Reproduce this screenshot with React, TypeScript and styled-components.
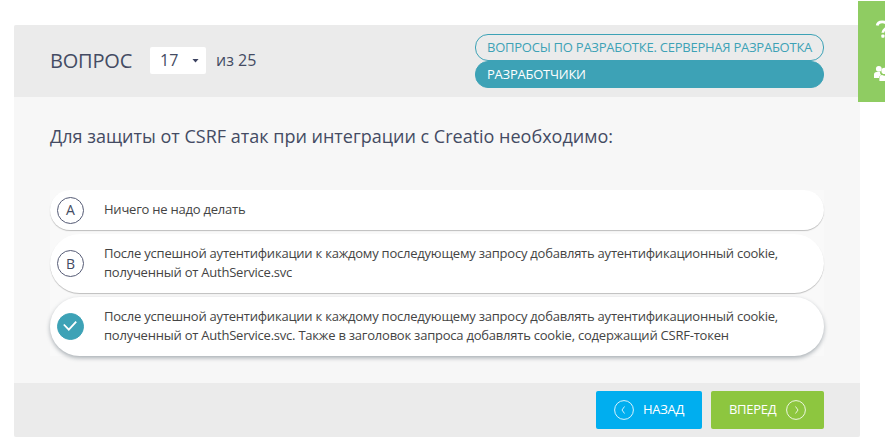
import React from "react";
import styled, { createGlobalStyle } from "styled-components";

const GlobalStyle = createGlobalStyle`
  *, *::before, *::after { box-sizing: border-box; }
  body {
    margin: 0;
    background: #fff;
    color: #444;
    font-family: "Open Sans", "Noto Sans", sans-serif;
    overflow: hidden;
  }
`;

const Page = styled.div`
  position: relative;
  width: 885px;
  height: 447px;
  padding: 25px 25px 10px 14px;
  overflow: hidden;
`;

const Card = styled.main`
  height: 412px;
  display: flex;
  flex-direction: column;
  border-radius: 2px;
  background: #f7f7f7;
  overflow: hidden;
`;

const Header = styled.header`
  height: 72px;
  flex: none;
  display: flex;
  justify-content: space-between;
  padding: 9px 36px;
  background: #ebebeb;
`;

const Counter = styled.div`
  display: flex;
  align-items: center;
  height: 54px;
  color: #444b63;
  font-size: 16px;
  white-space: nowrap;
`;

const Total = styled.span`
  margin-top: -2px;
`;

const Title = styled.h1`
  width: 100px;
  margin: 0;
  font-size: 20px;
  line-height: 28px;
  font-weight: 400;
  letter-spacing: -0.2px;
`;

const NumberSelect = styled.button`
  width: 56px;
  height: 27px;
  margin: -1px 10px 0 0;
  padding: 0 7px 1px 10px;
  display: flex;
  align-items: center;
  justify-content: space-between;
  border: 0;
  border-radius: 2px;
  background: #fff;
  color: inherit;
  font: inherit;
`;

const Caret = styled.span`
  width: 7px;
  height: 4px;
  margin-top: 1px;
  background: #3c4260;
  clip-path: polygon(0 0, 100% 0, 50% 100%);
`;

const Tags = styled.div`
  width: 349px;
`;

const Tag = styled.div<{ $filled?: boolean }>`
  height: 27px;
  padding: 0 11px;
  border: 1px solid #3da2b6;
  border-radius: 13px;
  background: ${(p) => (p.$filled ? "#3da2b6" : "transparent")};
  color: ${(p) => (p.$filled ? "#fff" : "#3da2b6")};
  font-size: 13px;
  line-height: 25px;
  letter-spacing: -0.24px;
  white-space: nowrap;
`;

const Body = styled.section`
  flex: 1;
  padding: 26px 36px 0;
`;

const Question = styled.h2`
  margin: 0 0 41px;
  color: #444b63;
  font-size: 18px;
  line-height: 26px;
  font-weight: 400;
  white-space: nowrap;
`;

const Answers = styled.div`
  display: flex;
  flex-direction: column;
  gap: 4px;
  background: #f9f9f9;
`;

const Answer = styled.div<{ $lines: number; $selected?: boolean }>`
  height: ${(p) => (p.$lines === 1 ? 40 : 59)}px;
  padding-left: 7px;
  display: flex;
  align-items: center;
  border-radius: 30px;
  background: #fff;
  box-shadow: ${(p) => (p.$selected ? "0 2px 4px rgba(60,75,85,.42)" : "0 1px 1px rgba(0,0,0,.24)")};
`;

const Marker = styled.span<{ $selected?: boolean }>`
  width: 27px;
  height: 27px;
  flex: none;
  margin-right: 20px;
  padding-bottom: 1px;
  display: flex;
  align-items: center;
  justify-content: center;
  border: 1px solid ${(p) => (p.$selected ? "#3da2b6" : "#555b75")};
  border-radius: 50%;
  background: ${(p) => (p.$selected ? "#3da2b6" : "#fff")};
  color: #444b63;
  font-size: 14px;
`;

const AnswerText = styled.div`
  padding-bottom: 2px;
  font-size: 13px;
  line-height: 19px;
  letter-spacing: -0.225px;
  white-space: nowrap;
`;

const Footer = styled.footer`
  height: 54px;
  padding: 8px 36px;
  display: flex;
  justify-content: flex-end;
  gap: 9px;
  background: #ebebeb;
`;

const NavButton = styled.button<{ $next?: boolean }>`
  width: ${(p) => (p.$next ? 113 : 106)}px;
  height: 38px;
  padding: 0 18px;
  display: flex;
  align-items: center;
  justify-content: space-between;
  border: 0;
  border-radius: 2px;
  background: ${(p) => (p.$next ? "#8dc63f" : "#00aeef")};
  color: #fff;
  font: 13px "Open Sans", sans-serif;
  letter-spacing: -0.3px;
  white-space: nowrap;
`;

const ButtonLabel = styled.span`
  margin-top: -2px;
`;

const NavIcon = styled.svg`
  width: 20px;
  height: 20px;
  flex: none;
  fill: none;
  stroke: #fff;
`;

const HelpPanel = styled.aside`
  position: absolute;
  top: 1px;
  left: 858px;
  width: 27px;
  height: 101px;
  padding: 19px 0 0 16px;
  display: flex;
  flex-direction: column;
  gap: 25px;
  overflow: hidden;
  background: #8fcc62;
`;

const SideIcon = styled.svg`
  width: 18px;
  height: 20px;
  flex: none;
`;

const answers = [
  { mark: "A", lines: ["Ничего не надо делать"] },
  {
    mark: "B",
    lines: [
      "После успешной аутентификации к каждому последующему запросу добавлять аутентификационный cookie,",
      "полученный от AuthService.svc",
    ],
  },
  {
    mark: "C",
    selected: true,
    lines: [
      "После успешной аутентификации к каждому последующему запросу добавлять аутентификационный cookie,",
      "полученный от AuthService.svc. Также в заголовок запроса добавлять cookie, содержащий CSRF-токен",
    ],
  },
];

const Chevron = ({ next = false }: { next?: boolean }) => (
  <NavIcon viewBox="0 0 20 20">
    <circle cx="10" cy="10" r="9.4" strokeOpacity=".85" />
    <path d={next ? "M9.5 6.5 12 10l-2.5 3.5" : "M10.5 6.5 8 10l2.5 3.5"} strokeOpacity=".8" />
  </NavIcon>
);

export default function App() {
  return (
    <>
      <GlobalStyle />
      <Page>
        <Card>
          <Header>
            <Counter>
              <Title>ВОПРОС</Title>
              <NumberSelect>17<Caret /></NumberSelect>
              <Total>из 25</Total>
            </Counter>
            <Tags>
              <Tag>ВОПРОСЫ ПО РАЗРАБОТКЕ. СЕРВЕРНАЯ РАЗРАБОТКА</Tag>
              <Tag $filled>РАЗРАБОТЧИКИ</Tag>
            </Tags>
          </Header>
          <Body>
            <Question>Для защиты от CSRF атак при интеграции с Creatio необходимо:</Question>
            <Answers>
              {answers.map((a) => (
                <Answer key={a.mark} $lines={a.lines.length} $selected={a.selected}>
                  <Marker $selected={a.selected}>
                    {a.selected ? (
                      <svg width="15" height="12" viewBox="0 0 15 12" fill="none">
                        <path d="m.8 4.5 5 5.2 7.4-8" stroke="#fff" strokeWidth="1.8" />
                      </svg>
                    ) : a.mark}
                  </Marker>
                  <AnswerText>
                    {a.lines.map((line) => <div key={line}>{line}</div>)}
                  </AnswerText>
                </Answer>
              ))}
            </Answers>
          </Body>
          <Footer>
            <NavButton><Chevron /><ButtonLabel>НАЗАД</ButtonLabel></NavButton>
            <NavButton $next><ButtonLabel>ВПЕРЕД</ButtonLabel><Chevron next /></NavButton>
          </Footer>
        </Card>
        <HelpPanel>
          <SideIcon viewBox="0 0 18 20">
            <path d="M3.2 5.5C3.6 2.8 5.4 1.8 8.2 1.8c3 0 4.8 1.5 4.8 4 0 3.8-4.2 3.3-4.2 7" fill="none" stroke="#fff" strokeWidth="2.8" />
            <rect x="7.3" y="14.6" width="3.2" height="3.2" rx="1" fill="#fff" />
          </SideIcon>
          <SideIcon viewBox="0 0 18 20" fill="#fff">
            <circle cx="4.8" cy="3.8" r="2.9" />
            <circle cx="10.5" cy="5.9" r="3.1" />
            <path d="M0 13V9.7Q0 7 2.7 7H6q-.1 2 1.2 3Q5 10.8 5 13Z" />
            <path d="M5.4 16v-2.6q0-3 2.7-3.3 2.4 1.2 4.8 0 2.7.3 2.7 3.3V16Z" />
          </SideIcon>
        </HelpPanel>
      </Page>
    </>
  );
}
